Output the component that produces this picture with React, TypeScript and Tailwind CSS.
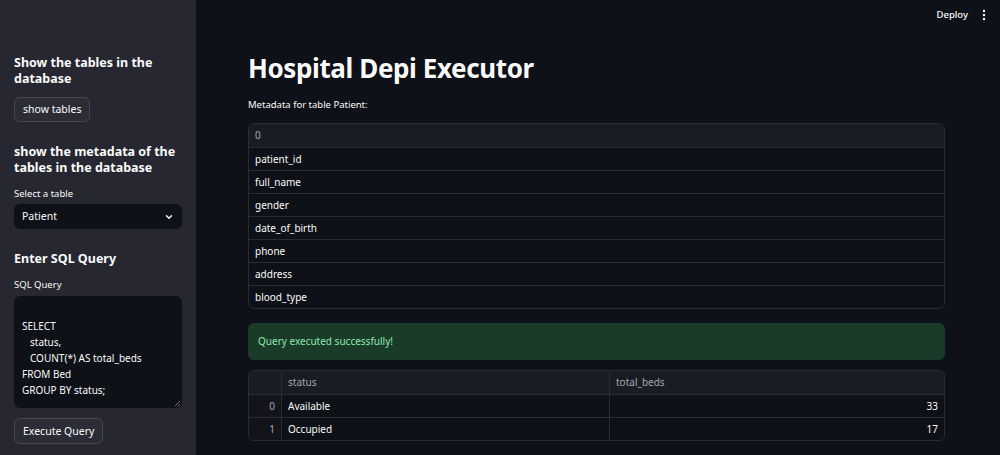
import React from "react";

const font = { fontFamily: '"Noto Sans", "Open Sans", sans-serif' };

function Button({ children }: { children: React.ReactNode }) {
  return (
    <button className="rounded-[6px] border border-[#45464f] bg-[#2b2c36] px-[8px] text-[10.5px] text-[#fafafa] leading-none">
      {children}
    </button>
  );
}

export default function App() {
  const fields = ["patient_id", "full_name", "gender", "date_of_birth", "phone", "address", "blood_type"];
  return (
    <div className="flex h-[455px] w-[1000px] overflow-hidden bg-[#0e1117] text-[#fafafa]" style={font}>
      {/* Sidebar */}
      <aside className="flex w-[196px] shrink-0 flex-col bg-[#262730] px-[14px] pt-[55px]">
        <h3 className="text-[12.5px] font-bold leading-[16px]">Show the tables in the database</h3>
        <div className="mt-[10px] flex h-[25px]">
          <Button>show tables</Button>
        </div>
        <h3 className="mt-[22px] text-[12.5px] font-bold leading-[16px]">show the metadata of the tables in the database</h3>
        <label className="mt-[12px] text-[9.5px] leading-[12px]">Select a table</label>
        <div className="mt-[4px] flex h-[25px] items-center justify-between rounded-[6px] bg-[#0e1117] px-[8px] text-[10.5px]">
          <span>Patient</span>
          <svg width="10" height="10" viewBox="0 0 24 24" fill="none" stroke="#fafafa" strokeWidth="3.5" strokeLinecap="round" strokeLinejoin="round">
            <path d="M6 9l6 6 6-6" />
          </svg>
        </div>
        <h3 className="mt-[22px] text-[12.5px] font-bold leading-[16px]">Enter SQL Query</h3>
        <label className="mt-[12px] text-[9.5px] leading-[12px]">SQL Query</label>
        <div className="relative mt-[5px] h-[112px] rounded-[6px] bg-[#0e1117] px-[8px] pt-[6px] text-[10px] leading-[16px]">
          <div className="h-[16px]" />
          <div>SELECT</div>
          <div className="pl-[8px]">status,</div>
          <div className="pl-[8px]">COUNT(*) AS total_beds</div>
          <div>FROM Bed</div>
          <div>GROUP BY status;</div>
          <svg className="absolute bottom-[2px] right-[2px]" width="5" height="5" viewBox="0 0 5 5">
            <path d="M5 0L0 5M5 3L3 5" stroke="#888" strokeWidth="0.8" />
          </svg>
        </div>
        <div className="mt-[10px] flex h-[26px]">
          <Button>Execute Query</Button>
        </div>
      </aside>

      {/* Main */}
      <main className="relative flex-1">
        <div className="absolute right-[14px] top-[8px] flex items-center gap-[14px] text-[9.5px] font-medium">
          <span>Deploy</span>
          <svg width="4" height="12" viewBox="0 0 4 12" fill="#fafafa">
            <circle cx="2" cy="2" r="1.2" />
            <circle cx="2" cy="6" r="1.2" />
            <circle cx="2" cy="10" r="1.2" />
          </svg>
        </div>
        <div className="ml-[52px] w-[697px] pt-[49px]">
          <h1 className="text-[26px] font-bold leading-[38px] tracking-[-0.015em]">Hospital Depi Executor</h1>
          <p className="mt-[11px] text-[9.5px] leading-[14px]">Metadata for table Patient:</p>
          <div className="mt-[11px] overflow-hidden rounded-[6px] border border-[#2a2c35] text-[10px]">
            <div className="flex h-[23px] items-center bg-[#1a1c24] px-[6px] text-[#a3a8b4]">0</div>
            {fields.map((f) => (
              <div key={f} className="flex h-[23px] items-center border-t border-[#2a2c35] px-[6px]">
                {f}
              </div>
            ))}
          </div>
          <div className="mt-[14px] flex h-[37px] items-center rounded-[6px] bg-[#1b3b29] px-[10px] text-[10px] text-[#8ee8ab]">
            Query executed successfully!
          </div>
          <div className="mt-[10px] overflow-hidden rounded-[6px] border border-[#2a2c35] text-[10px]">
            <div className="flex h-[23px] items-center bg-[#1a1c24] text-[#a3a8b4]">
              <div className="h-full w-[33px] border-r border-[#2a2c35]" />
              <div className="flex h-full w-[328px] items-center border-r border-[#2a2c35] px-[6px]">status</div>
              <div className="flex h-full flex-1 items-center px-[6px]">total_beds</div>
            </div>
            {[
              ["0", "Available", "33"],
              ["1", "Occupied", "17"],
            ].map(([i, s, n]) => (
              <div key={i} className="flex h-[23px] items-center border-t border-[#2a2c35]">
                <div className="flex h-full w-[33px] items-center justify-end border-r border-[#2a2c35] bg-[#12141a] px-[6px] text-[#a3a8b4]">
                  {i}
                </div>
                <div className="flex h-full w-[328px] items-center border-r border-[#2a2c35] px-[6px]">{s}</div>
                <div className="flex h-full flex-1 items-center justify-end px-[6px]">{n}</div>
              </div>
            ))}
          </div>
        </div>
      </main>
    </div>
  );
}
